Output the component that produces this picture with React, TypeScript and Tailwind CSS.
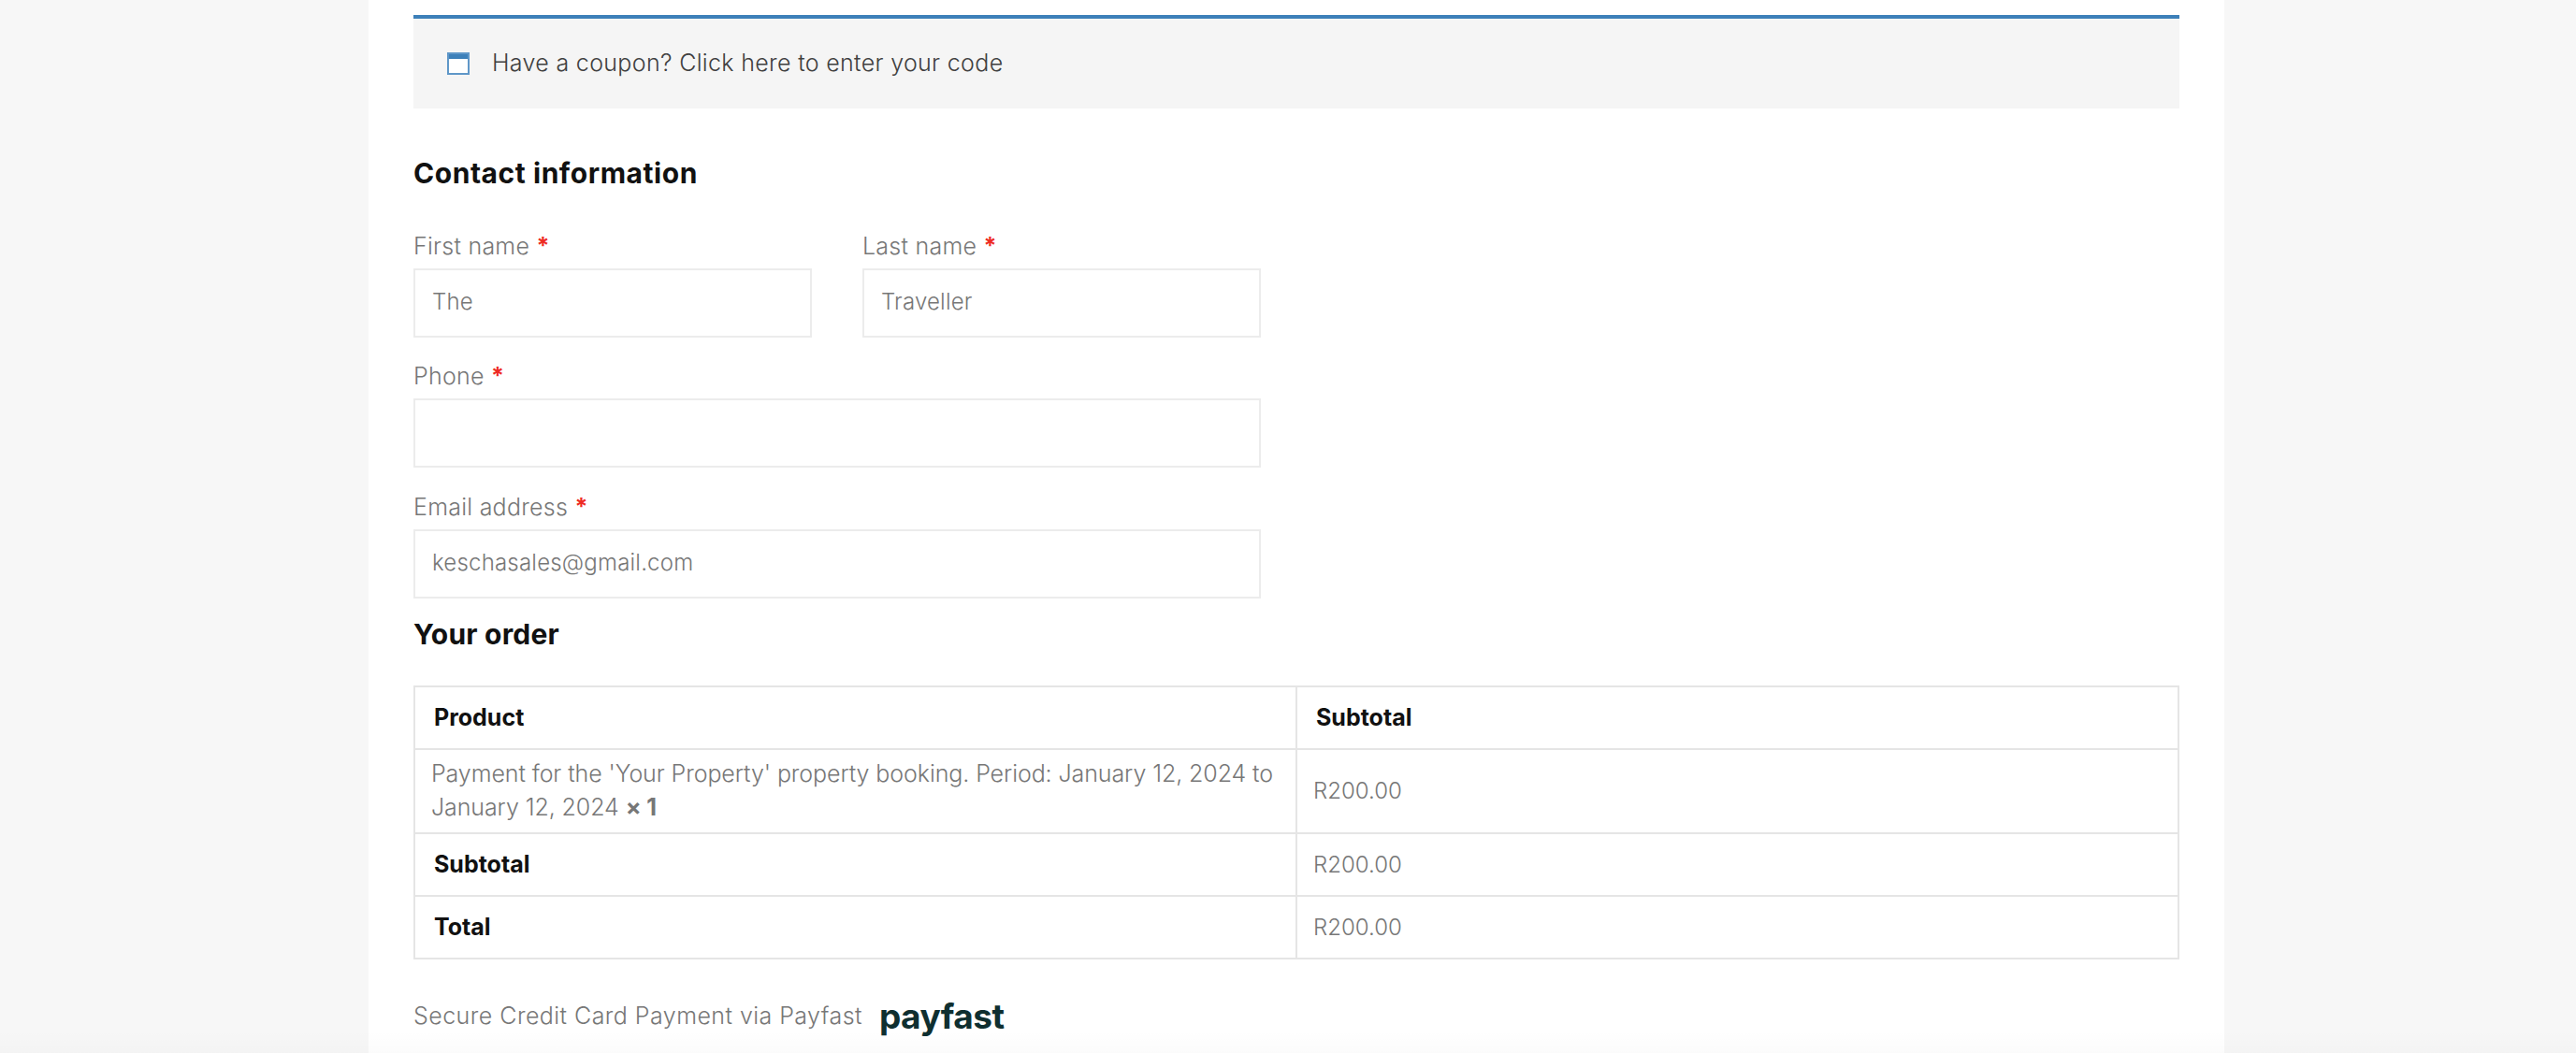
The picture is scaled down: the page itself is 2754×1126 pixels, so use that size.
const sans = "font-['Inter','Liberation_Sans',sans-serif]";

function Field({ label, value, className }: { label: string; value?: string; className?: string }) {
  return (
    <div className={className}>
      <div className="mb-[7px] h-9 pt-[1px] text-[25px] leading-9 font-light tracking-[0.25px] text-[#777777]">
        {label} <span className="font-bold text-[#ee2b24]">*</span>
      </div>
      <div className="flex h-[74px] items-center border-2 border-[#ececec] bg-white px-[18px] pb-[2px] text-[24px] font-light tracking-[0.2px] text-[#777777]">
        {value}
      </div>
    </div>
  );
}

export default function App() {
  return (
    <div className={`relative h-[1126px] overflow-hidden bg-[#f7f7f7] ${sans}`}>
      <div className="ml-[394px] h-full w-[1984px] bg-white px-12 pt-4">
        <div className="flex h-[100px] items-center gap-[24px] border-t-4 border-[#3d80b9] bg-[#f5f5f5] pl-9">
          <span className="flex h-6 w-6 flex-col border-2 border-[#5f97c8] bg-white">
            <span className="h-[5px] bg-[#3d80b9]" />
          </span>
          <span className="text-[25px] font-light tracking-[0.33px] text-[#404040]">Have a coupon? Click here to enter your code</span>
        </div>

        <h2 className="mt-[49px] h-10 text-[30px] leading-10 font-bold tracking-[0.55px] text-[#111111]">Contact information</h2>

        <div className="mt-[39px] flex w-[906px] gap-[54px]">
          <Field label="First name" value="The" className="flex-1" />
          <Field label="Last name" value="Traveller" className="flex-1" />
        </div>
        <Field label="Phone" className="mt-[22px] w-[906px]" />
        <Field label="Email address" value="keschasales@gmail.com" className="mt-[23px] w-[906px]" />

        <h2 className="mt-[18px] h-10 text-[30px] leading-10 font-bold tracking-[0.2px] text-[#111111]">Your order</h2>

        <table className="mt-[35px] w-full border-collapse border-2 border-[#e5e5e5] text-[25px] text-[#777777]">
          <tbody>
            <tr className="h-[67px]">
              <td className="w-[943px] border-2 border-[#e5e5e5] pl-5 font-bold text-[#111111]">Product</td>
              <td className="border-2 border-[#e5e5e5] pl-5 font-bold text-[#111111]">Subtotal</td>
            </tr>
            <tr className="h-[90px]">
              <td className="border-2 border-[#e5e5e5] pr-3 pl-[17px] pb-[2px] leading-9 font-light tracking-[-0.09px]">
                Payment for the 'Your Property' property booking. Period: January 12, 2024 to January 12, 2024{' '}
                <strong className="font-bold whitespace-nowrap">× 1</strong>
              </td>
              <td className="border-2 border-[#e5e5e5] pl-[17px] text-[24px] font-light">R200.00</td>
            </tr>
            <tr className="h-[67px]">
              <td className="border-2 border-[#e5e5e5] pl-5 font-bold text-[#111111]">Subtotal</td>
              <td className="border-2 border-[#e5e5e5] pl-[17px] text-[24px] font-light">R200.00</td>
            </tr>
            <tr className="h-[67px]">
              <td className="border-2 border-[#e5e5e5] pl-5 font-bold text-[#111111]">Total</td>
              <td className="border-2 border-[#e5e5e5] pl-[17px] text-[24px] font-light">R200.00</td>
            </tr>
          </tbody>
        </table>

        <div className="mt-[43px] flex h-9 items-center gap-[18px]">
          <span className="text-[25px] font-light tracking-[0.45px] text-[#777777]">Secure Credit Card Payment via Payfast</span>
          <span className="text-[37px] leading-9 font-bold tracking-[-0.5px] text-[#0f2f30]">payfast</span>
        </div>
      </div>
      {/* faint fade along the bottom edge */}
      <div className="pointer-events-none absolute inset-x-0 bottom-0 h-6 bg-gradient-to-t from-black/[0.015] to-transparent" />
    </div>
  );
}
